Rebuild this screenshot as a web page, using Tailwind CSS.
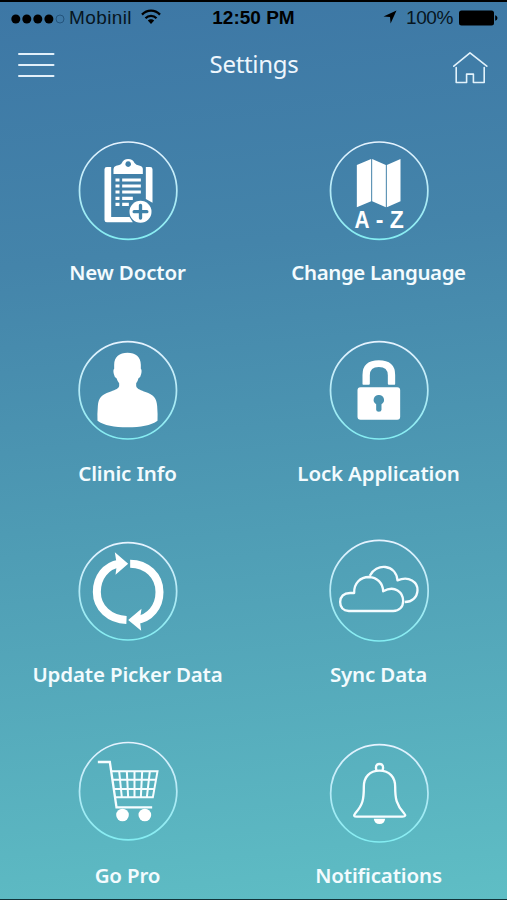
<!DOCTYPE html>
<html lang="en">
<head>
    <meta charset="UTF-8">
    <meta name="viewport" content="width=device-width, initial-scale=1.0">
    <title>Settings</title>
    <script src="https://cdn.jsdelivr.net/npm/@tailwindcss/browser@4"></script>
</head>
<body class="w-[507px] h-[900px] overflow-hidden font-['Noto_Sans',sans-serif] text-white">
    <div class="flex flex-col h-full overflow-hidden border-t-2 border-b border-t-black border-b-[#12343a] bg-linear-[174deg,#3d77a5,#4484aa_28%,#4e9bb4_56%,#5fbec5]">
        <!-- Status bar -->
        <div class="grid grid-cols-3 items-center shrink-0 h-[33px] pl-[11px] pr-[9px] text-[19px] text-[#071521] font-['Liberation_Sans',sans-serif]">
            <div class="flex items-center">
                <svg class="w-[55px] h-[12px] shrink-0" viewBox="0 0 55 12">
                    <g fill="#000"><circle cx="4.8" cy="6" r="4.5"/><circle cx="15.8" cy="6" r="4.5"/><circle cx="26.8" cy="6" r="4.5"/><circle cx="37.9" cy="6" r="4.5"/></g>
                    <circle cx="49" cy="6" r="4" fill="none" stroke="#24547c" stroke-width="1"/>
                </svg>
                <span class="ml-[3px] tracking-[0.4px]">Mobinil</span>
                <svg class="w-[20px] h-[16px] ml-[9px] -mt-[3px] shrink-0" viewBox="0 0 20 16" fill="none" stroke="#000" stroke-width="2.3">
                    <path d="M1 5.6C6 .4 14 .4 19 5.6M4.5 9.2c3-3.2 8-3.2 11 0"/>
                    <path d="M6.8 11.6c1.8-1.9 4.6-1.9 6.4 0L10 15z" fill="#000" stroke="none"/>
                </svg>
            </div>
            <div class="text-center font-bold text-black whitespace-nowrap -ml-[2px]">12:50 PM</div>
            <div class="flex items-center justify-end">
                <svg class="w-[14px] h-[14px] mr-[9px] -mt-[3px]" viewBox="0 0 14 14"><path d="M13.5.5 7.6 13.4 7 7 .5 6.4z" fill="#000"/></svg>
                <span class="tracking-[-0.4px]">100%</span>
                <svg class="w-[39px] h-[16px] ml-[6px] -mt-px" viewBox="0 0 39 16"><rect y=".5" width="35" height="15" rx="2.5" fill="#000"/><path d="M36.2 5.2c3 1 3 4.6 0 5.6z" fill="#000"/></svg>
            </div>
        </div>

        <!-- Header -->
        <div class="flex items-center justify-between shrink-0 h-[60px] px-[18px]">
            <svg class="w-[37px] h-[26px]" viewBox="0 0 37 26" stroke="#e2f0fa" stroke-width="2" stroke-linecap="round"><path d="M1 1.9h34.5M1 13h34.5M1 23.9h34.5"/></svg>
            <h1 class="text-[24px] leading-[30px] font-[370] tracking-[-0.3px] text-[#eef6fd] mb-[2px]">Settings</h1>
            <svg class="w-[36px] h-[34px] mt-[3px]" viewBox="0 0 36 34" fill="none" stroke="#e2f2fb" stroke-width="1.6" stroke-linejoin="round" stroke-linecap="round">
                <path d="M.8 16.2 17 2.8 33.8 16.2M3.2 17.6v14.9h10.4v-8.4h6.8v8.4h10.8V17.6"/>
            </svg>
        </div>

        <!-- Menu -->
        <div class="grid grid-cols-[251px_251px] auto-rows-[201px] shrink-0 ml-[2px] mt-[44px] text-[20.5px] leading-[28px] tracking-[-0.15px] font-semibold text-[#f3fbfe] whitespace-nowrap">
            <div class="flex flex-col items-center">
                <svg class="w-[104px] h-[104px] overflow-visible" viewBox="25.5 27 312 312">
                    <defs>
                        <linearGradient id="ring" x1="0" y1="0" x2="0" y2="1">
                            <stop offset="0" stop-color="#e6f3ff"/>
                            <stop offset=".5" stop-color="#b5eaf6"/>
                            <stop offset="1" stop-color="#83edf2"/>
                        </linearGradient>
                    </defs>
                    <circle cx="182" cy="182" r="146" fill="none" stroke="url(#ring)" stroke-width="5.2"/>
                    <path d="M131 111h-13q-7 0-7 7v152q0 7 7 7h78l-10-16h-55zM235 111h13q7 0 7 7v100l-20-11z" fill="#fff"/>
                    <path fill-rule="evenodd" d="M138 132v-15q0-8 8-10 14-1 17-8 5-12 19-12t19 12q4 7 16 8 9 2 9 10v15zM182 94a8.5 8.5 0 1 0 .1 0z" fill="#fff"/>
                    <path d="M144 150h12M144 168h12M144 186h12M144 205h12M144 223h12M164 150h56M164 168h56M164 186h56M164 205h32M164 223h20" stroke="#fff" stroke-width="9.5"/>
                    <circle cx="219" cy="245" r="33" fill="#fff"/>
                    <path d="M219 226v38M200 245h38" stroke="#3f82a9" stroke-width="10" stroke-linecap="round"/>
                </svg>
                <span class="mt-[15px]">New Doctor</span>
            </div>
            <div class="flex flex-col items-center">
                <svg class="w-[104px] h-[104px] overflow-visible" viewBox="139.5 27 312 312">
                    <circle cx="296" cy="182" r="146" fill="none" stroke="url(#ring)" stroke-width="5.2"/>
                    <path d="M229 105l43-18v127l-43 18zM275 87l41 18v127l-41-18zM319 105l41-18v127l-41 18z" fill="#fff"/>
                    <g fill="#fff" font-family="Liberation Sans, sans-serif" font-weight="700" font-size="69">
                        <text x="222" y="293" textLength="45" lengthAdjust="spacingAndGlyphs">A</text>
                        <text x="286" y="293">-</text>
                        <text x="328" y="293">Z</text>
                    </g>
                </svg>
                <span class="mt-[15px] tracking-[-0.4px]">Change Language</span>
            </div>
            <div class="flex flex-col items-center">
                <svg class="w-[104px] h-[104px] overflow-visible" viewBox="25.5 30 312 312">
                    <circle cx="181" cy="181" r="146" fill="none" stroke="url(#ring)" stroke-width="5.2"/>
                    <path d="M180 68C204 68 220 80 220 104V116Q224 120 221 132 219 143 213 145 211 154 206 160V168C208 178 222 181 234 186 258 194 267 204 269 228Q271 252 270 272C250 286 220 292 180 292 140 292 110 286 90 272Q89 252 91 228C93 204 102 194 126 186 138 181 153 178 155 168V160Q150 154 147 145 141 143 139 132 136 120 140 116V104C140 80 156 68 180 68Z" fill="#fff"/>
                </svg>
                <span class="mt-[15px]">Clinic Info</span>
            </div>
            <div class="flex flex-col items-center">
                <svg class="w-[104px] h-[104px] overflow-visible" viewBox="124.5 30 312 312">
                    <circle cx="281" cy="181" r="146" fill="none" stroke="url(#ring)" stroke-width="5.2"/>
                    <path d="M231 162v-27q0-44 49-44t49 44v27q0 2-2 2h-17q-3 0-3-3v-25q0-25-27-25t-27 25v25q0 3-3 3h-17q-2 0-2-2z" fill="#fff"/>
                    <path fill-rule="evenodd" d="M225 172h110q9 0 9 9v79q0 9-9 9H225q-9 0-9-9v-79q0-9 9-9zM280 195a15 15 0 0 0-8 28v16q0 6 8 6t8-6v-16a15 15 0 0 0-8-28z" fill="#fff"/>
                </svg>
                <span class="mt-[15px]">Lock Application</span>
            </div>
            <div class="flex flex-col items-center">
                <svg class="w-[104px] h-[104px] overflow-visible" viewBox="160.5 33 312 312">
                    <circle cx="316.5" cy="184" r="146" fill="none" stroke="url(#ring)" stroke-width="5.2"/>
                    <path d="M312 270C262 268 223 234 223 186 223 142 250 107 290 101M323 101C372 101 411 137 411 186 411 231 382 265 342 270" fill="none" stroke="#fff" stroke-width="24"/>
                    <path d="M277 67l40 34-38 33 4-30zM357 236l-40 34 39 32-4-31z" fill="#fff"/>
                </svg>
                <span class="mt-[15px]">Update Picker Data</span>
            </div>
            <div class="flex flex-col items-center">
                <svg class="w-[104px] h-[104px] overflow-visible" viewBox="49.5 33 312 312">
                    <ellipse cx="206" cy="182" rx="147" ry="151" fill="none" stroke="url(#ring)" stroke-width="5.2"/>
                    <path d="M115 243q-26-2-26-27 1-26 30-27h12c-1-30 19-48 44-48 25 1 42 18 43 43 35-20 60 3 60 29 0 18-12 30-30 30zM178 137c18-38 78-36 83 14 35-14 61 5 60 30-1 21-17 35-38 35" fill="none" stroke="#f4fcff" stroke-width="7" stroke-linejoin="round"/>
                </svg>
                <span class="mt-[15px]">Sync Data</span>
            </div>
            <div class="flex flex-col items-center">
                <svg class="w-[104px] h-[104px] overflow-visible" viewBox="25.5 36 312 312">
                    <circle cx="182" cy="183.5" r="146" fill="none" stroke="url(#ring)" stroke-width="5.2"/>
                    <g fill="none" stroke="#f6fdff">
                        <path d="M91 96h36l20 136h107" stroke-width="7"/>
                        <path d="M132 124h138l-14 78H143M136 149h129M139 177h121M155 124l8 78M178 124l4 78M201 124v78M224 124l-4 78M247 124l-9 78" stroke-width="6"/>
                    </g>
                    <circle cx="165" cy="255" r="19" fill="#fff"/>
                    <circle cx="232" cy="255" r="19" fill="#fff"/>
                </svg>
                <span class="mt-[15px]">Go Pro</span>
            </div>
            <div class="flex flex-col items-center">
                <svg class="w-[104px] h-[104px] overflow-visible" viewBox="49.5 36 312 312">
                    <circle cx="206.5" cy="190" r="146" fill="none" stroke="url(#ring)" stroke-width="5.2"/>
                    <g fill="none" stroke="#f6fdff" stroke-width="7" stroke-linejoin="round">
                        <path d="M207 122c-30 0-47 20-47 48 0 38-3 54-25 79-7 9-4 11 4 11h137c8 0 11-3 4-11-22-24-26-42-26-79 0-28-17-48-47-48z"/>
                        <path d="M198 122q-6-20 9-20t9 20"/>
                    </g>
                    <path d="M190 266h34q-2 16-17 16t-17-16z" fill="#fff"/>
                </svg>
                <span class="mt-[15px]">Notifications</span>
            </div>
        </div>
    </div>
</body>
</html>
